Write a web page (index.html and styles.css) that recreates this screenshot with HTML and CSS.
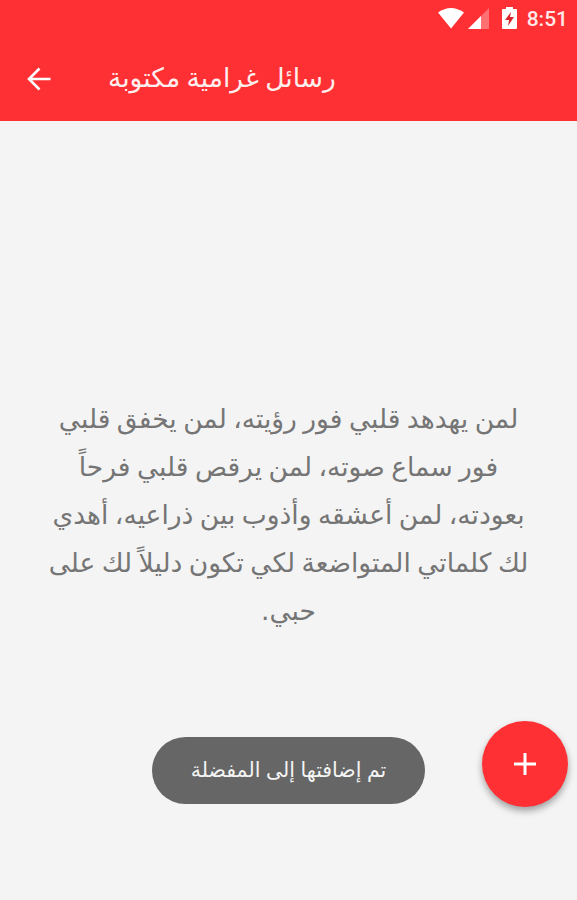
FILE: index.html
```html
<!DOCTYPE html>
<html lang="ar">
<head>
  <meta charset="UTF-8" />
  <meta name="viewport" content="width=device-width, initial-scale=1.0" />
  <title>رسائل غرامية مكتوبة</title>
  <link rel="stylesheet" href="styles.css">
</head>
<body>

<div class="screen">
  <header class="app-header">
    <div class="status-bar">
      <svg class="wifi" viewBox="0 0 26 21"><path d="M0 4.5Q13-4.5 26 4.5L13 20.5Z" fill="#fff"/></svg>
      <svg class="signal" viewBox="0 0 21 21"><path d="M21 0V21H0Z" fill="#ff7073"/><path d="M13 8V21H0Z" fill="#fff"/></svg>
      <svg class="battery" viewBox="0 0 15 22"><path d="M4 0h7v2h3q1 0 1 1v18q0 1-1 1H1q-1 0-1-1V3q0-1 1-1h3z" fill="#fff"/><path d="M9 5L3 13h4l-1 6 6-9H8z" fill="#d9282b"/></svg>
      <span class="clock">8:51</span>
    </div>
    <div class="toolbar">
      <button class="back-btn" aria-label="رجوع">
        <svg viewBox="0 0 24 24"><path d="M23 12H2M12 1.5L1.5 12L12 22.5" fill="none" stroke="#fff" stroke-width="2.6"/></svg>
      </button>
      <h1 dir="rtl">رسائل غرامية مكتوبة</h1>
    </div>
  </header>

  <main class="content">
    <p class="message" dir="rtl">لمن يهدهد قلبي فور رؤيته، لمن يخفق قلبي<br>فور سماع صوته، لمن يرقص قلبي فرحاً<br>بعودته، لمن أعشقه وأذوب بين ذراعيه، أهدي<br>لك كلماتي المتواضعة لكي تكون دليلاً لك على<br>حبي.</p>
  </main>

  <div class="toast" dir="rtl">تم إضافتها إلى المفضلة</div>
  <button class="fab" aria-label="إضافة">
    <svg viewBox="0 0 22 22"><path d="M11 0V22M0 11H22" stroke="#fff" stroke-width="3"/></svg>
  </button>
</div>

</body>
</html>
```
FILE: styles.css
```css
* {
  box-sizing: border-box;
}

body {
  margin: 0;
  background: #f4f4f4;
  font-family: "DejaVu Sans", sans-serif;
}

.screen {
  position: relative;
  display: flex;
  flex-direction: column;
  height: 900px;
  overflow: hidden;
}

.app-header {
  height: 121px;
  background: #ff3033;
  color: #fff;
}

.status-bar {
  display: flex;
  align-items: center;
  justify-content: flex-end;
  height: 36px;
  padding-right: 9px;
}

.wifi {
  width: 26px;
  height: 21px;
  margin-right: 4px;
}

.signal {
  width: 21px;
  height: 21px;
  margin-right: 13px;
}

.battery {
  width: 15px;
  height: 22px;
  margin-right: 10px;
}

.clock {
  padding-top: 2px;
  font-family: Roboto, sans-serif;
  font-size: 21px;
  font-weight: 500;
  color: #ffe8e8;
}

.toolbar {
  display: flex;
  align-items: center;
  height: 85px;
  padding-left: 27px;
}

button {
  display: flex;
  align-items: center;
  justify-content: center;
  padding: 0;
  border: none;
  cursor: pointer;
}

.back-btn {
  background: none;
}

.back-btn svg {
  width: 25px;
  height: 24px;
}

h1 {
  margin: 0 0 3px 56px;
  font-size: 26.5px;
  font-weight: 400;
  word-spacing: -2px;
  color: #ffeeee;
  white-space: nowrap;
}

.content {
  flex: 1;
  padding-top: 274px;
}

.message {
  margin: 0;
  color: #757575;
  font-size: 26.5px;
  line-height: 48px;
  text-align: center;
  word-spacing: -2px;
  white-space: nowrap;
}

.toast {
  position: absolute;
  left: 152px;
  top: 737px;
  display: flex;
  align-items: center;
  justify-content: center;
  width: 273px;
  height: 67px;
  padding-bottom: 2px;
  border-radius: 34px;
  background: #666;
  color: #f4f4f4;
  font-size: 20.5px;
  word-spacing: -1px;
  white-space: nowrap;
}

.fab {
  position: absolute;
  left: 482px;
  top: 721px;
  width: 86px;
  height: 86px;
  border-radius: 50%;
  background: #ff3033;
  box-shadow: 0 4px 7px rgba(0, 0, 0, 0.35);
}

.fab svg {
  width: 22px;
  height: 22px;
}
```
